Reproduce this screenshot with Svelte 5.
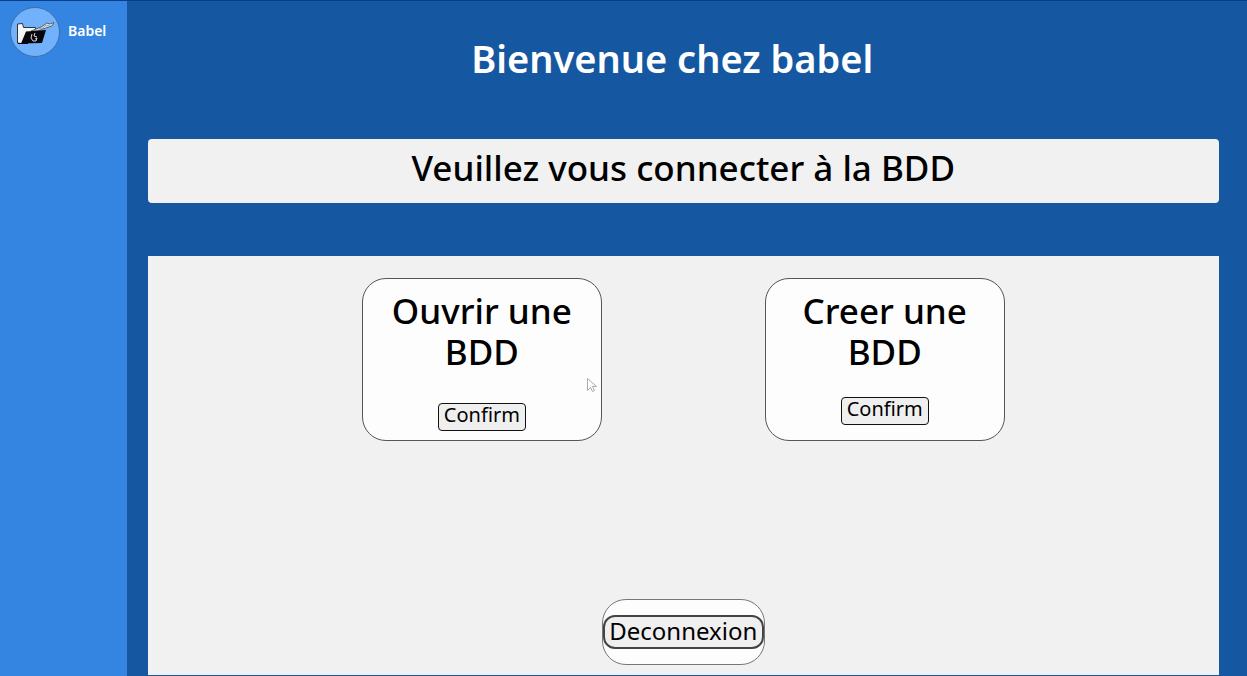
<script>
  const choices = [
    { id: 'open', title: 'Ouvrir une BDD' },
    { id: 'create', title: 'Creer une BDD' }
  ];
</script>

<div class="page">
  <aside class="sidebar">
    <a class="brand" href="#accueil">
      <svg class="logo" viewBox="0 0 50 50" aria-hidden="true">
        <circle cx="25" cy="25" r="24.5" fill="#72b2fc" stroke="#3d6ea8" />
        <path d="M7.500 36V17l5-.5 1 4h12v5l-14 11z" fill="#f4f5f7" stroke="#333" />
        <path d="M21 24l10-4 6-4 3 1 4-1.500-2 3.500-9 3-5 2z" fill="#d7dde3" stroke="#59636e" />
        <path d="M28 22l5-1 3-3M36 19l4-1" stroke="#9ba6b0" fill="none" />
        <path d="M16 24.500l7-.5 13-1-4 13-21 .5z" fill="#05070b" />
        <path d="M8 36.500h10" stroke="#05070b" />
        <path d="M22 27l-1 4 2 3h3l1-3-2 1M25 26l-1 3 3 1" fill="none" stroke="#d5d8dc" />
      </svg>
      <span>Babel</span>
    </a>
  </aside>

  <main>
    <h1>Bienvenue chez babel</h1>
    <h2 class="notice">Veuillez vous connecter à la BDD</h2>
    <section class="panel">
      {#each choices as choice (choice.id)}
        <article class="card {choice.id}">
          <h3>{choice.title}</h3>
          <button type="button">Confirm</button>
          {#if choice.id === 'open'}
            <svg class="pointer" viewBox="0 0 10 15" aria-hidden="true">
              <path d="M.5.5v12l3-3 2 4 2-1-2-4h4z" fill="#fff" stroke="#aaa" />
            </svg>
          {/if}
        </article>
      {/each}
      <div class="logout">
        <button type="button">Deconnexion</button>
      </div>
    </section>
  </main>
</div>

<style>
  .page {
    box-sizing: border-box;
    display: grid;
    grid-template-columns: 10.15% 1fr;
    min-height: 100vh;
    border-top: 1px solid #073b8c;
    background: #1558a1;
    color: #000;
    font-family: "Noto Sans", sans-serif;
  }

  .sidebar {
    padding: 6px 10px;
    background: #3485e2;
  }

  .brand {
    display: flex;
    align-items: center;
    gap: 8px;
    color: #fff;
    font-size: 14px;
    font-weight: 600;
    text-decoration: none;
  }

  .brand span {
    padding-bottom: 3px;
    line-height: 20px;
  }

  .logo {
    flex: none;
    width: 50px;
    height: 50px;
  }

  main {
    display: flex;
    flex-direction: column;
    padding: 31px 28px 1px 21px;
  }

  h1,
  h2,
  h3 {
    margin: 0;
    font-weight: 500;
    text-align: center;
  }

  h1 {
    padding-right: 22px;
    color: #fff;
    font-size: 38px;
    font-weight: 600;
    line-height: 52px;
  }

  .notice {
    box-sizing: border-box;
    height: 64px;
    margin: 55px 0 53px;
    border-radius: 4px;
    background: #f1f1f1;
    font-size: 35px;
    line-height: 58px;
  }

  .panel {
    flex: 1;
    display: grid;
    grid-template-columns: 22.4% 15.2% 22.4%;
    grid-template-rows: auto 1fr;
    justify-content: center;
    padding: 22px 0 10px;
    background: #f1f1f1;
  }

  .card {
    box-sizing: border-box;
    position: relative;
    display: flex;
    flex-direction: column;
    align-items: center;
    justify-content: space-between;
    min-height: 163px;
    padding: 11px 24px 9px;
    border: 1px solid #555;
    border-radius: 24px;
    background: #fdfdfd;
  }

  .create {
    grid-column: 3;
    padding-bottom: 15px;
  }

  h3 {
    font-size: 35px;
    line-height: 41px;
  }

  button {
    padding: 0 5px 4px;
    border: 1px solid #111;
    border-radius: 4px;
    background: #efefef;
    color: #000;
    font: 20px/22px "Noto Sans", sans-serif;
  }

  .logout {
    box-sizing: border-box;
    grid-column: 2;
    align-self: end;
    display: flex;
    align-items: center;
    min-height: 66px;
    border: 1px solid #777;
    border-radius: 24px;
    background: #fdfdfd;
  }

  .logout button {
    width: 100%;
    padding: 0 4px 2px;
    border: 2px solid #444;
    border-radius: 12px;
    font-size: 24px;
    line-height: 28px;
  }

  .pointer {
    position: absolute;
    right: 4px;
    bottom: 47px;
    width: 10px;
    height: 15px;
  }
</style>
